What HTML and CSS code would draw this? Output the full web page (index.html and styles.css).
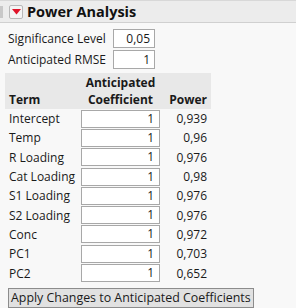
FILE: index.html
```html
<!DOCTYPE html>
<html>
<head>
<meta charset="utf-8">
<link rel="stylesheet" href="styles.css">
</head>
<body>
<div class="panel">
  <div class="header">
    <span class="grip"></span>
    <span class="toggle"><svg width="9" height="6" viewBox="0 0 9 6"><polygon points="0,0 9,0 4.5,5.5" fill="#e0142a"/></svg></span>
    <span class="title">Power Analysis</span>
  </div>
  <div class="content">
    <div class="params">
      <div class="param"><span class="plabel">Significance Level</span><span class="box">0,05</span></div>
      <div class="param"><span class="plabel">Anticipated RMSE</span><span class="box">1</span></div>
    </div>
    <table class="tbl">
      <thead>
        <tr><th class="c-term">Term</th><th class="c-coef">Anticipated<br>Coefficient</th><th class="c-pow">Power</th></tr>
      </thead>
      <tbody>
        <tr><td class="c-term">Intercept</td><td class="c-coef"><span class="cell">1</span></td><td class="c-pow">0,939</td></tr>
        <tr><td class="c-term">Temp</td><td class="c-coef"><span class="cell">1</span></td><td class="c-pow">0,96</td></tr>
        <tr><td class="c-term">R Loading</td><td class="c-coef"><span class="cell">1</span></td><td class="c-pow">0,976</td></tr>
        <tr><td class="c-term">Cat Loading</td><td class="c-coef"><span class="cell">1</span></td><td class="c-pow">0,98</td></tr>
        <tr><td class="c-term">S1 Loading</td><td class="c-coef"><span class="cell">1</span></td><td class="c-pow">0,976</td></tr>
        <tr><td class="c-term">S2 Loading</td><td class="c-coef"><span class="cell">1</span></td><td class="c-pow">0,976</td></tr>
        <tr><td class="c-term">Conc</td><td class="c-coef"><span class="cell">1</span></td><td class="c-pow">0,972</td></tr>
        <tr><td class="c-term">PC1</td><td class="c-coef"><span class="cell">1</span></td><td class="c-pow">0,703</td></tr>
        <tr><td class="c-term">PC2</td><td class="c-coef"><span class="cell">1</span></td><td class="c-pow">0,652</td></tr>
      </tbody>
    </table>
    <div class="btnrow"><span class="btn">Apply Changes to Anticipated Coefficients</span></div>
  </div>
</div>
</body>
</html>
```
FILE: styles.css
```css
html, body {
  margin: 0;
  padding: 0;
  background: #f8f8f8;
}
body {
  font-family: "Open Sans", "Noto Sans", sans-serif;
  font-size: 12px;
  color: #1a1a1a;
  width: 296px;
  height: 308px;
  overflow: hidden;
  white-space: nowrap;
}
.header {
  display: flex;
  align-items: center;
  height: 23px;
  background: #ececec;
  border-top: 1px solid #d8d8d8;
  border-bottom: 1px solid #d0d0d0;
  box-sizing: border-box;
}
.grip {
  width: 3px;
  height: 12px;
  background: #c8c8c8;
  margin-right: 6px;
}
.toggle {
  width: 14px;
  height: 14px;
  box-sizing: border-box;
  border: 1px solid #b8b8b8;
  border-radius: 2px;
  background: #f4f4f4;
  display: flex;
  align-items: center;
  justify-content: center;
  margin-right: 4px;
}
.toggle svg { display: block; margin-top: 1px; }
.title {
  font-weight: bold;
  font-size: 14.5px;
  color: #111;
}
.content {
  padding: 6px 0 0 8px;
}
.params {
  display: flex;
  flex-direction: column;
  gap: 2px;
  margin-bottom: 4px;
}
.param {
  display: flex;
  align-items: center;
  height: 19px;
}
.plabel {
  width: 105px;
}
.box {
  width: 42px;
  height: 19px;
  box-sizing: border-box;
  border: 1px solid #a8a8a8;
  background: #fff;
  text-align: right;
  padding-right: 4px;
  line-height: 17px;
}
.tbl {
  border-collapse: collapse;
  margin-left: -3px;
}
.tbl th {
  background: #e8e8e8;
  font-weight: bold;
  line-height: 17px;
  vertical-align: bottom;
  padding: 1px 4px 1px 4px;
}
.tbl td {
  height: 19.3px;
  padding: 0 4px;
  line-height: 17px;
}
.tbl th.c-term { text-align: left; width: 67px; }
.tbl th.c-coef { text-align: center; padding: 1px 1px; width: 79px; }
.tbl th.c-pow { text-align: right; width: 42px; }
.tbl td.c-term { text-align: left; }
.tbl td.c-coef { padding: 0 1px; }
.tbl td.c-pow { text-align: right; }
.cell {
  display: block;
  width: 79px;
  height: 18px;
  box-sizing: border-box;
  border: 1px solid #a8a8a8;
  background: #fff;
  text-align: right;
  padding-right: 5px;
  line-height: 16px;
}
.btnrow {
  margin-top: 5px;
}
.btn {
  display: inline-block;
  height: 20px;
  box-sizing: border-box;
  border: 1px solid #8c8c8c;
  background: #e1e1e1;
  padding: 0 2px;
  font-size: 12.4px;
  line-height: 18px;
}
```
